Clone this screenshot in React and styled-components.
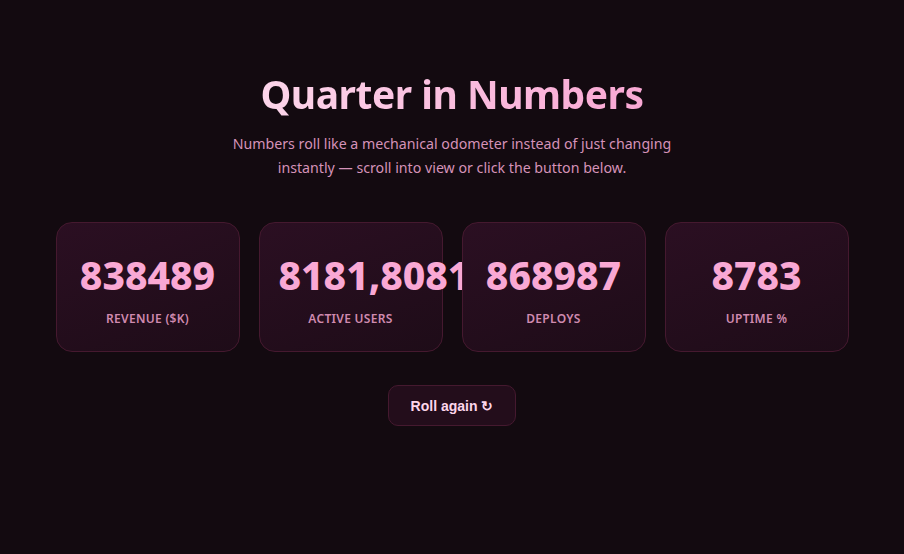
import React from "react";
import styled, { createGlobalStyle } from "styled-components";

const Global = createGlobalStyle`
  html, body { margin: 0; padding: 0; background: #130a10; }
  body { font-family: "Noto Sans", "Open Sans", sans-serif; }
  * { box-sizing: border-box; }
`;

const Page = styled.main`
  min-height: 554px;
  background: #130a10;
  display: flex;
  flex-direction: column;
  align-items: center;
  padding-top: 66px;
`;

const Title = styled.h1`
  margin: 0;
  font-size: 39px;
  line-height: 56px;
  font-weight: 700;
  background: linear-gradient(90deg, #fcd5ea 0%, #f9a8d4 100%);
  -webkit-background-clip: text;
  background-clip: text;
  color: transparent;
  letter-spacing: -0.5px;
`;

const Subtitle = styled.p`
  margin: 10px 0 0;
  max-width: 470px;
  text-align: center;
  font-size: 14.2px;
  line-height: 24px;
  color: #d592b8;
`;

const Grid = styled.section`
  margin-top: 42px;
  display: grid;
  grid-template-columns: repeat(4, 184px);
  gap: 19px;
`;

const Card = styled.div`
  position: relative;
  height: 130px;
  border-radius: 16px;
  border: 1px solid #45192f;
  background: linear-gradient(160deg, #2b0f22 0%, #1e0c18 100%);
  padding: 30px 19px 0;
  text-align: center;
`;

const Value = styled.div`
  font-size: 39px;
  line-height: 44px;
  font-weight: 800;
  color: #f9a8d4;
  white-space: nowrap;
`;

const Label = styled.div`
  margin-top: 13px;
  font-size: 12px;
  font-weight: 600;
  letter-spacing: 0.3px;
  text-transform: uppercase;
  color: #d08aaf;
`;

const Button = styled.button`
  margin-top: 33px;
  width: 128px;
  height: 41px;
  border-radius: 10px;
  border: 1px solid #45192f;
  background: #230d1b;
  color: #fcd5ea;
  font-family: "Liberation Sans", Arial, sans-serif;
  font-size: 14px;
  font-weight: 700;
  cursor: pointer;
`;

const stats = [
  { value: "838489", label: "Revenue ($K)" },
  { value: "8181,80818", label: "Active Users" },
  { value: "868987", label: "Deploys" },
  { value: "8783", label: "Uptime %" },
];

export default function App() {
  return (
    <>
      <Global />
      <Page>
        <Title>Quarter in Numbers</Title>
        <Subtitle>
          Numbers roll like a mechanical odometer instead of just changing
          instantly — scroll into view or click the button below.
        </Subtitle>
        <Grid>
          {stats.map((s) => (
            <Card key={s.label}>
              <Value>{s.value}</Value>
              <Label>{s.label}</Label>
            </Card>
          ))}
        </Grid>
        <Button>Roll again ↻</Button>
      </Page>
    </>
  );
}
